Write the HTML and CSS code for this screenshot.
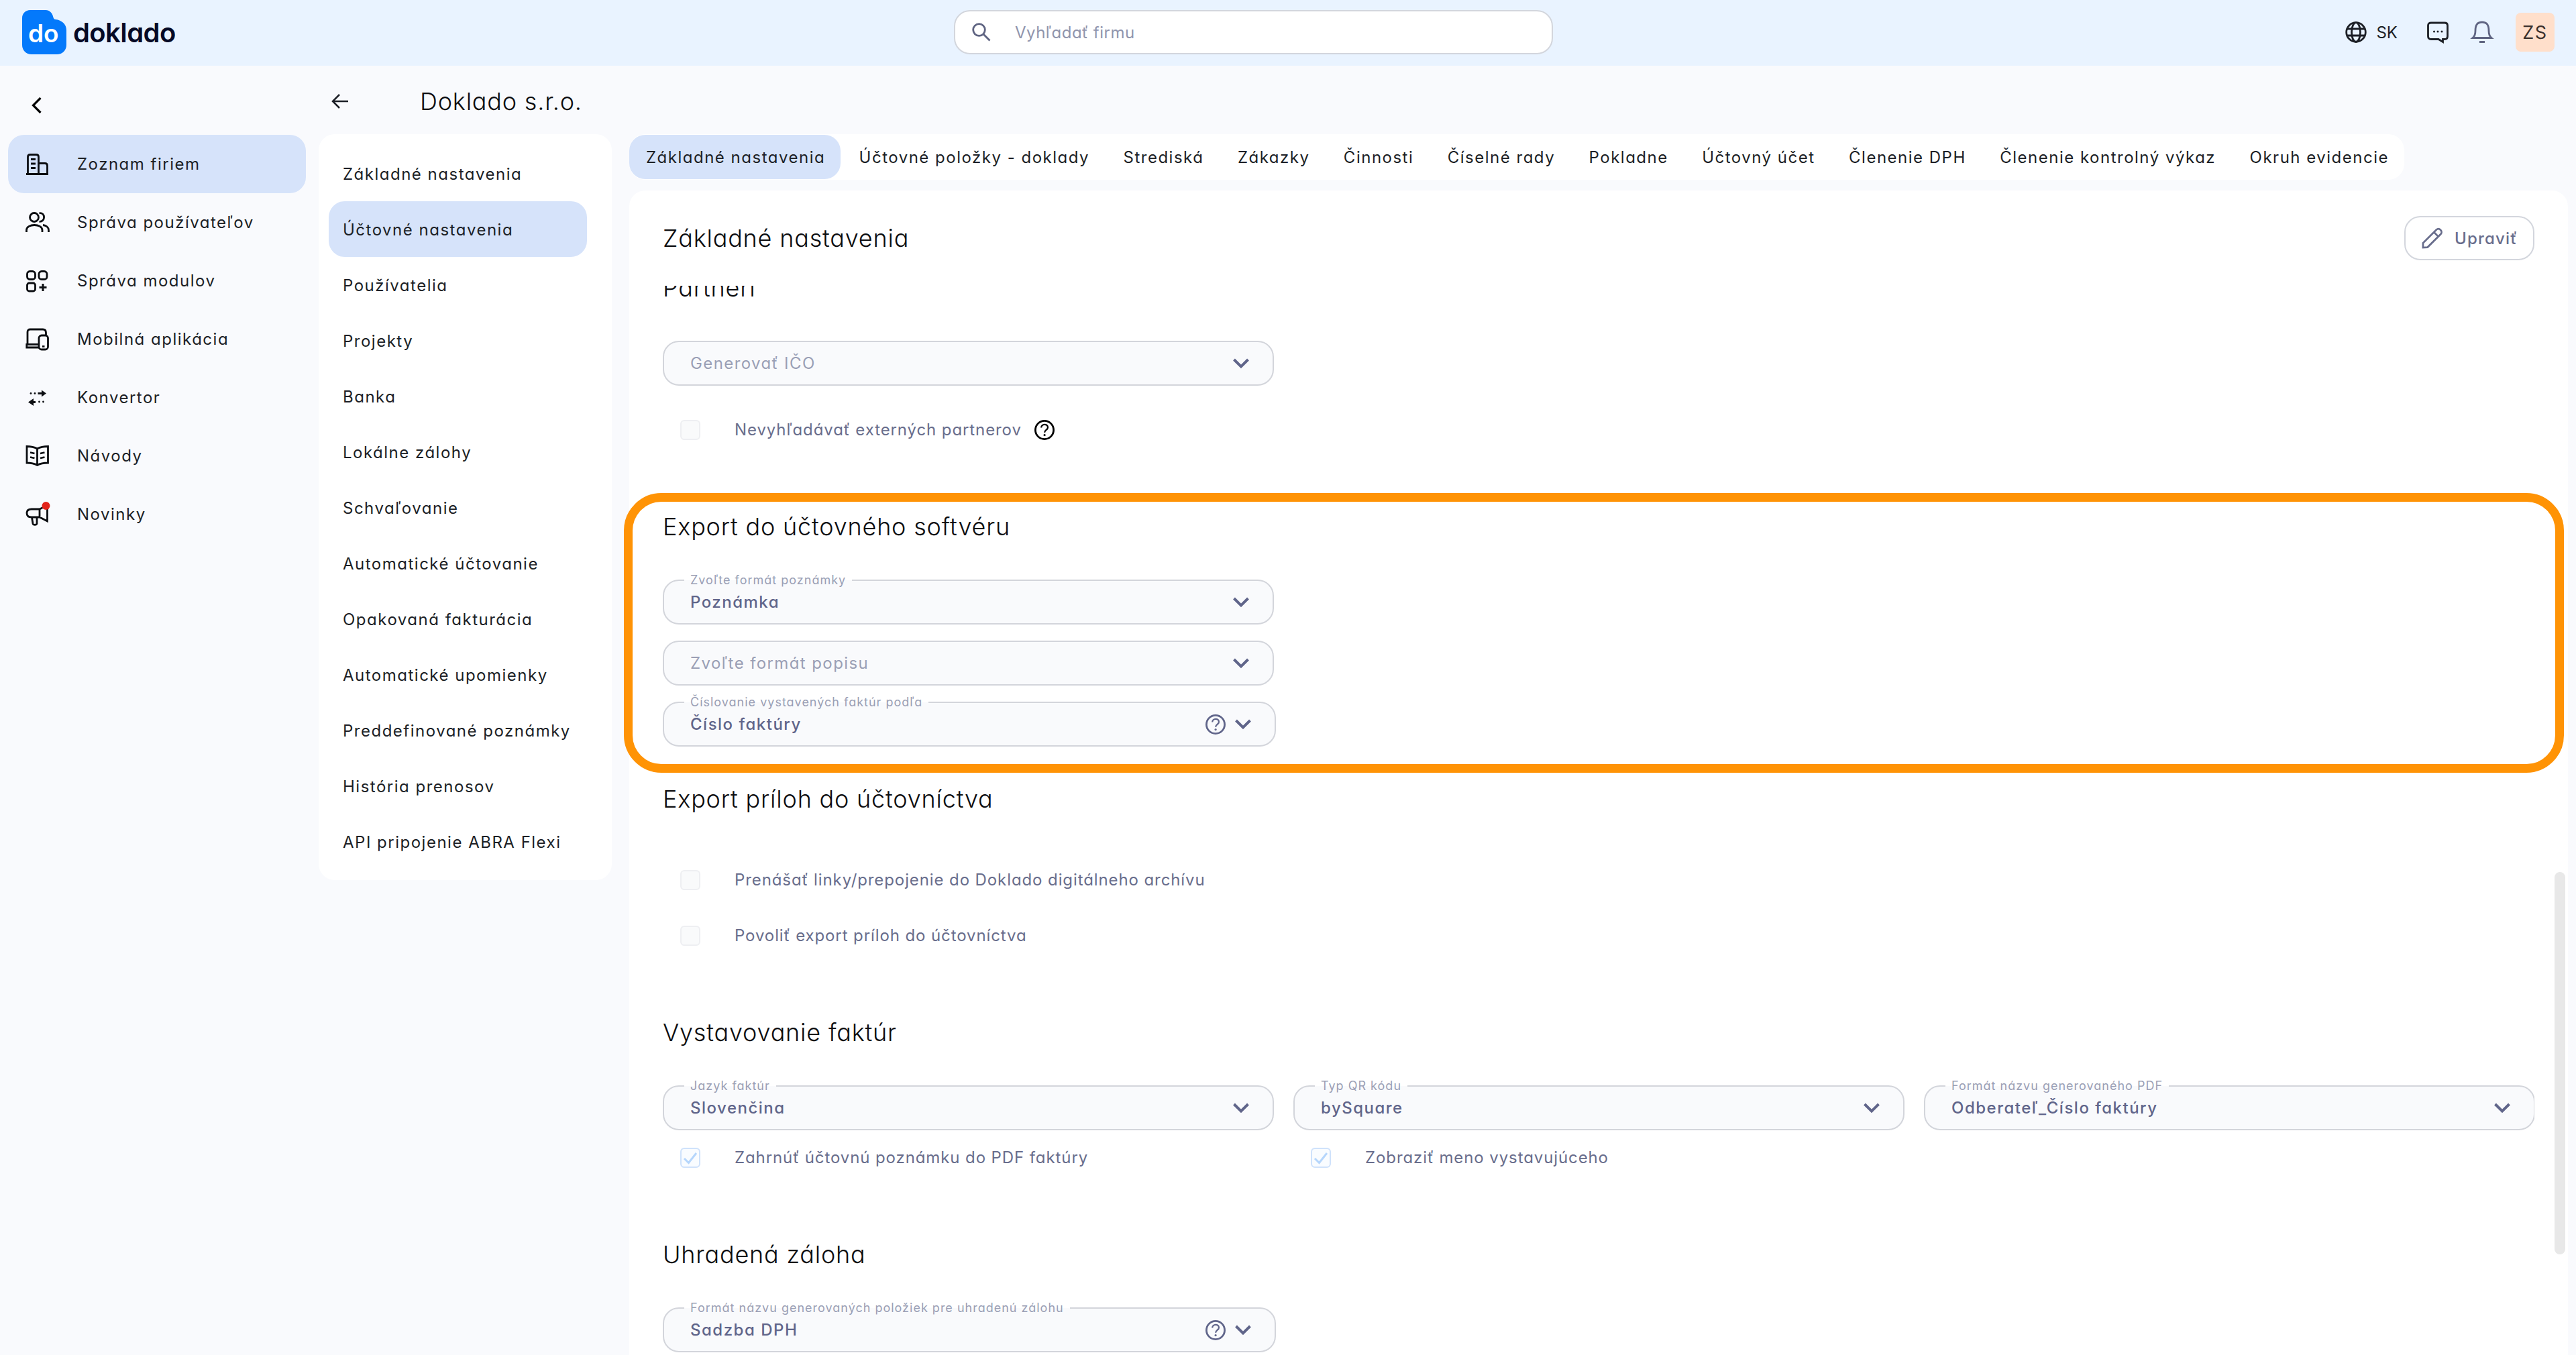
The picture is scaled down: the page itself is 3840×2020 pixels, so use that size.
FILE: index.html
```
<!DOCTYPE html>
<html lang="sk">
<head>
    <meta charset="UTF-8">
    <meta name="viewport" content="width=device-width, initial-scale=1.0">
    <title>Doklado - Účtovné nastavenia</title>
    <link rel="stylesheet" href="styles.css">
</head>
<body>
    <!-- Shared icons -->
    <svg class="sprite" width="0" height="0">
        <symbol id="i-down" viewBox="0 0 24 16"><path d="M1.5 2 L12 12.5 L22.5 2" stroke-width="4"/></symbol>
        <symbol id="i-help" viewBox="0 0 30 30"><circle cx="15" cy="15" r="13.6"/><path d="M10.2 11.6c0-6.2 9.8-6.2 9.8-.4 0 3.6-4.9 3.8-4.9 7.6" stroke-width="2.3"/><circle cx="15.1" cy="22.6" r="1.6" class="solid"/></symbol>
        <symbol id="i-check" viewBox="0 0 24 24"><path d="M3 13 L9.5 19.5 L21 5" stroke-width="3"/></symbol>
    </svg>

    <header class="topbar">
        <div class="brand">
            <div class="brand-mark">
                <svg class="brand-shape" viewBox="0 0 66 66"><path d="M12 0H35C41 0 45 4 46.500 11C47 13 48 14 50 14C59 15 66 21 66 30V52C66 60 60 66 52 66H14C6 66 0 60 0 52V12C0 5 5 0 12 0Z"/></svg>
                <span class="brand-do">do</span>
            </div>
            <span class="brand-name">doklado</span>
        </div>
        <div class="search">
            <svg class="icon search-icon" viewBox="0 0 28 28"><circle cx="10.500" cy="10.500" r="8.800"/><path d="M17 17 L26.500 26.500"/></svg>
            <span>Vyhľadať firmu</span>
        </div>
        <div class="tools">
            <svg class="icon" viewBox="0 0 32 32"><circle cx="16" cy="16" r="14.300"/><ellipse cx="16" cy="16" rx="6.500" ry="14.300"/><path d="M3 11H29M3 21H29"/></svg>
            <span class="lang">SK</span>
            <svg class="icon chat" viewBox="0 0 32 32"><path d="M6 2H26C29 2 30.500 3.500 30.500 6V22C30.500 25 29 26.500 26 26.500H23.500V30.500L17 26.500H6C3 26.500 1.500 25 1.500 22V6C1.500 3.500 3 2 6 2Z"/><g class="solid"><circle cx="10.500" cy="15" r="1.500"/><circle cx="16" cy="15" r="1.500"/><circle cx="22" cy="15" r="1.500"/></g></svg>
            <svg class="icon bell" viewBox="0 0 32 34"><path d="M2 25.500C5 23 6 20 6 15C6 6 9 2 16 2C23 2 26 6 26 15C26 20 27 23 30 25.500Z"/><path d="M12 31.500H20" stroke-width="3"/></svg>
            <div class="avatar">ZS</div>
        </div>
    </header>

    <div class="layout">
        <nav class="sidebar">
            <div class="collapse">
                <svg class="icon" viewBox="0 0 16 26"><path d="M13.500 2 L2.500 13 L13.500 24" stroke-width="3.200"/></svg>
            </div>
            <a class="side-item active">
                <svg class="icon" viewBox="0 0 36 36"><path d="M1 32.500H34M3.500 32V7C3.500 4.500 4.500 3.500 7 3.500H16C18.500 3.500 19.500 4.500 19.500 7V32M19.500 16.500H29C31.500 16.500 32.500 17.500 32.500 20V32M8 10.500H15M8 17H15M8 23.500H15"/></svg>
                <span>Zoznam firiem</span>
            </a>
            <a class="side-item">
                <svg class="icon" viewBox="0 0 36 36"><circle cx="13" cy="10" r="6.500"/><path d="M20.500 3.800C30 2.500 30 17 20.500 16.300M1.500 32V29C1.500 19 25 19 25 29V32M26 21.500C31 22 34.500 25 34.500 29V32"/></svg>
                <span>Správa používateľov</span>
            </a>
            <a class="side-item">
                <svg class="icon" viewBox="0 0 36 36"><rect x="2.500" y="3.500" width="12" height="12" rx="4"/><rect x="20" y="3.500" width="12" height="12" rx="4"/><rect x="2.500" y="21" width="12" height="12" rx="3"/><path d="M26 22V33M20.500 27.500H31.500" stroke-width="3"/></svg>
                <span>Správa modulov</span>
            </a>
            <a class="side-item">
                <svg class="icon" viewBox="0 0 36 36"><path d="M3 25.500V7C3 4.500 4.500 3 7 3H26C29 3 30.500 4.500 30.500 8V11M20 25.500H1.800V30H20"/><rect x="20" y="12" width="13.500" height="21" rx="4"/><path d="M25 28.500H28.500"/></svg>
                <span>Mobilná aplikácia</span>
            </a>
            <a class="side-item">
                <svg class="icon" viewBox="0 0 36 36"><path d="M18.500 11.500H26M10 24.500H15"/><g class="solid"><path d="M24 6.500L31 11.500L24 16.500ZM12 19L4 24.500L12 30Z"/><circle cx="8" cy="11.500" r="1.400"/><circle cx="14" cy="11.500" r="1.400"/><circle cx="20.500" cy="24" r="1.400"/><circle cx="26.500" cy="24" r="1.400"/></g></svg>
                <span>Konvertor</span>
            </a>
            <a class="side-item">
                <svg class="icon" viewBox="0 0 36 36"><path d="M17.500 7C13 4.500 8 3.500 2 3.500V28C8 28 13 29 17.500 31.500C22 29 27 28 33.500 28V3.500C27 3.500 22 4.500 17.500 7ZM17.500 7V31M7 12.500L13.500 14M7 19.500L13.500 21M22 14L28.500 12.500M22 21L28.500 19.500"/></svg>
                <span>Návody</span>
            </a>
            <a class="side-item">
                <svg class="icon" viewBox="0 0 36 36"><path d="M21 10H9C4 10 2 12.500 2 16C2 19.500 4 22 9 22H21L32.500 28V4L21 10V22M9.500 22.500L11 31.500C11.500 34 16.500 34 17 31.500V22.500"/><circle cx="30.500" cy="5" r="6" class="dot"/></svg>
                <span>Novinky</span>
            </a>
        </nav>

        <div class="page">
            <div class="page-head">
                <svg class="icon back" viewBox="0 0 26 26"><path d="M25 13H2M12 3L2 13L12 23" stroke-width="2.500"/></svg>
                <h1>Doklado s.r.o.</h1>
            </div>

            <div class="columns">
                <nav class="submenu">
                    <a class="sub-item">Základné nastavenia</a>
                    <a class="sub-item active">Účtovné nastavenia</a>
                    <a class="sub-item">Používatelia</a>
                    <a class="sub-item">Projekty</a>
                    <a class="sub-item">Banka</a>
                    <a class="sub-item">Lokálne zálohy</a>
                    <a class="sub-item">Schvaľovanie</a>
                    <a class="sub-item">Automatické účtovanie</a>
                    <a class="sub-item">Opakovaná fakturácia</a>
                    <a class="sub-item">Automatické upomienky</a>
                    <a class="sub-item">Preddefinované poznámky</a>
                    <a class="sub-item">História prenosov</a>
                    <a class="sub-item">API pripojenie ABRA Flexi</a>
                </nav>

                <main class="main">
                    <nav class="tabs">
                        <a class="tab active">Základné nastavenia</a>
                        <a class="tab">Účtovné položky - doklady</a>
                        <a class="tab">Strediská</a>
                        <a class="tab">Zákazky</a>
                        <a class="tab">Činnosti</a>
                        <a class="tab">Číselné rady</a>
                        <a class="tab">Pokladne</a>
                        <a class="tab">Účtovný účet</a>
                        <a class="tab">Členenie DPH</a>
                        <a class="tab">Členenie kontrolný výkaz</a>
                        <a class="tab">Okruh evidencie</a>
                    </nav>

                    <div class="panel">
                        <div class="panel-head">
                            <h2>Základné nastavenia</h2>
                            <button class="edit">
                                <svg class="icon" viewBox="0 0 32 32"><path d="M2 30V23L22.500 2.500C24.500 .8 27 .8 29 2.800C31 4.800 31 7.500 29.300 9.300L9 29.500ZM19 6.500L25.500 13"/></svg>
                                <span>Upraviť</span>
                            </button>
                        </div>

                        <div class="panel-body">
                            <section class="block">
                                <h2>Partneri</h2>
                                <div class="grid">
                                    <div class="select"><span class="placeholder">Generovať IČO</span><svg class="icon down"><use href="#i-down"/></svg></div>
                                </div>
                                <div class="check spaced"><i class="box"></i><span>Nevyhľadávať externých partnerov</span><svg class="icon help dark"><use href="#i-help"/></svg></div>
                            </section>

                            <section class="block tight">
                                <h2>Export do účtovného softvéru</h2>
                                <div class="stack">
                                    <div class="select"><label>Zvoľte formát poznámky</label><span class="value">Poznámka</span><svg class="icon down"><use href="#i-down"/></svg></div>
                                    <div class="select"><span class="placeholder">Zvoľte formát popisu</span><svg class="icon down"><use href="#i-down"/></svg></div>
                                    <div class="select wide"><label>Číslovanie vystavených faktúr podľa</label><span class="value">Číslo faktúry</span><svg class="icon help"><use href="#i-help"/></svg><svg class="icon down"><use href="#i-down"/></svg></div>
                                </div>
                            </section>

                            <section class="block">
                                <h2>Export príloh do účtovníctva</h2>
                                <div class="check"><i class="box"></i><span>Prenášať linky/prepojenie do Doklado digitálneho archívu</span></div>
                                <div class="check"><i class="box"></i><span>Povoliť export príloh do účtovníctva</span></div>
                            </section>

                            <section class="block">
                                <h2>Vystavovanie faktúr</h2>
                                <div class="grid">
                                    <div class="select"><label>Jazyk faktúr</label><span class="value">Slovenčina</span><svg class="icon down"><use href="#i-down"/></svg></div>
                                    <div class="select"><label>Typ QR kódu</label><span class="value">bySquare</span><svg class="icon down"><use href="#i-down"/></svg></div>
                                    <div class="select"><label>Formát názvu generovaného PDF</label><span class="value">Odberateľ_Číslo faktúry</span><svg class="icon down"><use href="#i-down"/></svg></div>
                                    <div class="check"><i class="box checked"><svg class="icon"><use href="#i-check"/></svg></i><span>Zahrnúť účtovnú poznámku do PDF faktúry</span></div>
                                    <div class="check"><i class="box checked"><svg class="icon"><use href="#i-check"/></svg></i><span>Zobraziť meno vystavujúceho</span></div>
                                </div>
                            </section>

                            <section class="block">
                                <h2>Uhradená záloha</h2>
                                <div class="stack">
                                    <div class="select wide"><label>Formát názvu generovaných položiek pre uhradenú zálohu</label><span class="value">Sadzba DPH</span><svg class="icon help"><use href="#i-help"/></svg><svg class="icon down"><use href="#i-down"/></svg></div>
                                </div>
                            </section>
                        </div>

                        <div class="scroll-thumb"></div>
                        <div class="highlight"></div>
                    </div>
                </main>
            </div>
        </div>
    </div>
</body>
</html>
```

FILE: styles.css
```
* {
    box-sizing: border-box;
}

body {
    margin: 0;
    height: 2020px;
    overflow: hidden;
    display: flex;
    flex-direction: column;
    background: #f9fafd;
    color: #1c1f26;
    font-family: Inter, "Open Sans", sans-serif;
    font-size: 24px;
    font-feature-settings: "cv11";
    letter-spacing: 1.5px;
}

h1, h2 {
    margin: 0;
    font-size: 36px;
    font-weight: 350;
    line-height: 48px;
    letter-spacing: 0.8px;
    color: #0c0d10;
}

.sprite {
    position: absolute;
}

.icon {
    flex: none;
    fill: none;
    stroke: currentColor;
    stroke-width: 2.8;
    overflow: visible;
}

.solid {
    fill: currentColor;
    stroke: none;
}

/* Top bar */
.topbar {
    flex: none;
    height: 98px;
    display: grid;
    grid-template-columns: 1389px 893px 1fr;
    align-items: center;
    padding: 0 32px 2px 33px;
    background: #e9f3ff;
}

.brand {
    display: flex;
    align-items: center;
    gap: 10px;
}

.brand-mark {
    position: relative;
    width: 66px;
    height: 66px;
}

.brand-shape {
    display: block;
    fill: #0479fb;
}

.brand-do {
    position: absolute;
    left: 9px;
    top: 11px;
    font-size: 37px;
    font-weight: 600;
    line-height: 48px;
    letter-spacing: 0;
    color: #fff;
}

.brand-name {
    font-size: 40px;
    font-weight: 600;
    letter-spacing: -0.6px;
    color: #050a26;
}

.search {
    height: 66px;
    display: flex;
    align-items: center;
    gap: 36px;
    padding-left: 25px;
    border: 2px solid #d3d6dd;
    border-radius: 24px;
    background: #fff;
    color: #9095ad;
    letter-spacing: 0.5px;
}

.search-icon {
    width: 28px;
    height: 28px;
    color: #5f6482;
}

.tools {
    display: flex;
    align-items: center;
    justify-content: flex-end;
}

.tools .icon {
    width: 32px;
    height: 32px;
}

.lang {
    margin: 0 44px 0 14px;
    letter-spacing: 0;
}

.tools .bell {
    margin: 0 34px 0 34px;
    height: 34px;
    color: #5f6482;
}

.avatar {
    width: 58px;
    height: 58px;
    display: grid;
    place-items: center;
    border-radius: 8px;
    background: #ffdfcb;
    font-size: 27px;
    color: #3a302c;
}

/* Left navigation */
.layout {
    flex: 1;
    min-height: 0;
    display: flex;
}

.sidebar {
    width: 475px;
    padding-left: 12px;
}

.collapse {
    height: 103px;
    padding: 46px 0 0 35px;
}

.collapse .icon {
    display: block;
    width: 16px;
    height: 26px;
    color: #000;
}

.side-item {
    width: 444px;
    height: 87px;
    display: flex;
    align-items: center;
    gap: 41px;
    padding-left: 26px;
    border-radius: 24px;
}

.side-item .icon {
    width: 36px;
    height: 36px;
    color: #0c0e12;
}

.side-item .dot {
    fill: #e2231a;
    stroke: none;
}

.active {
    background: #d6e3fa;
}

/* Company page */
.page {
    flex: 1;
    display: flex;
    flex-direction: column;
}

.page-head {
    height: 102px;
    display: flex;
    align-items: center;
    gap: 106px;
    padding: 4px 0 0 19px;
}

.back {
    width: 26px;
    height: 26px;
}

.columns {
    flex: 1;
    min-height: 0;
    display: flex;
    align-items: flex-start;
    gap: 26px;
}

.submenu {
    width: 437px;
    padding: 17px 37px 16px 15px;
    border-radius: 24px;
    background: #fff;
}

.sub-item {
    display: flex;
    align-items: center;
    height: 83px;
    padding: 1px 0 0 21px;
    border-radius: 24px;
    white-space: nowrap;
}

.main {
    width: 2890px;
    height: 100%;
    display: flex;
    flex-direction: column;
    gap: 16px;
}

.tabs {
    width: 2646px;
    height: 68px;
    display: flex;
    justify-content: space-between;
    align-items: center;
    border-radius: 24px;
    background: #fff;
}

.tab {
    height: 66px;
    display: flex;
    align-items: center;
    padding: 0 23px 0 25px;
    border-radius: 24px;
    white-space: nowrap;
}

.panel {
    position: relative;
    flex: 1;
    min-height: 0;
    display: flex;
    flex-direction: column;
    padding: 0 50px;
    border-radius: 24px 24px 0 0;
    background: #fff;
}

.panel-head {
    flex: none;
    height: 142px;
    display: flex;
    justify-content: space-between;
    align-items: center;
}

.edit {
    width: 194px;
    height: 66px;
    display: flex;
    align-items: center;
    gap: 18px;
    padding: 0 0 0 24px;
    border: 2px solid #d3d6dd;
    border-radius: 24px;
    background: #fff;
    font: inherit;
    font-weight: 500;
    letter-spacing: 1.2px;
    color: #686d8c;
}

.edit .icon {
    width: 31px;
    height: 31px;
}

.panel-body {
    flex: 1;
    overflow: hidden;
}

/* The list is scrolled, its first heading goes under the panel head */
.panel-body .block:first-child {
    margin-top: -21px;
}

.block {
    margin-bottom: 79px;
}

.block.tight {
    margin-bottom: 55px;
}

.block h2 {
    margin-bottom: 55px;
}

.grid {
    display: grid;
    grid-template-columns: repeat(3, 910px);
    column-gap: 30px;
}

.stack {
    display: flex;
    flex-direction: column;
    gap: 25px;
}

.select {
    position: relative;
    width: 911px;
    height: 67px;
    margin-bottom: -1px;
    display: flex;
    align-items: center;
    gap: 14px;
    padding: 0 35px 0 39px;
    border: 2px solid #d3d5db;
    border-radius: 24px;
    background: #f9fafc;
    color: #60658a;
}

.select.wide {
    width: 914px;
}

/* Floating label sits over the top border */
.select label {
    position: absolute;
    left: 30px;
    top: -13px;
    padding: 0 9px;
    background: linear-gradient(#fff 50%, #f9fafc 50%);
    font-size: 18px;
    line-height: 24px;
    letter-spacing: 1px;
    color: #9a9fb5;
}

.placeholder, .value {
    flex: 1;
}

.placeholder {
    color: #9a9fb5;
    letter-spacing: 1.4px;
}

.value {
    font-weight: 500;
}

.down {
    width: 24px;
    height: 16px;
}

.help {
    width: 30px;
    height: 30px;
}

.check {
    height: 83px;
    display: flex;
    align-items: center;
    padding-left: 26px;
    color: #686d8c;
    letter-spacing: 0.9px;
}

.check.spaced {
    margin-top: 25px;
}

.check .help {
    margin-left: 19px;
}

.check .dark {
    color: #000;
}

.box {
    width: 30px;
    height: 30px;
    display: grid;
    place-items: center;
    margin-right: 51px;
    border: 2px solid #eeeff2;
    border-radius: 6px;
    background: #f9fafb;
}

.box.checked {
    border-color: #cfe2fb;
    background: #f9fcff;
    color: #b5d6fc;
}

.box .icon {
    width: 24px;
    height: 24px;
}

.scroll-thumb {
    position: absolute;
    right: 4px;
    top: 1016px;
    width: 16px;
    height: 570px;
    border-radius: 8px;
    background: #e8e8e8;
}

/* Marked area around the export settings */
.highlight {
    position: absolute;
    left: -8px;
    top: 451px;
    width: 2892px;
    height: 417px;
    border: 13px solid #ff9305;
    border-radius: 56px;
}
```
